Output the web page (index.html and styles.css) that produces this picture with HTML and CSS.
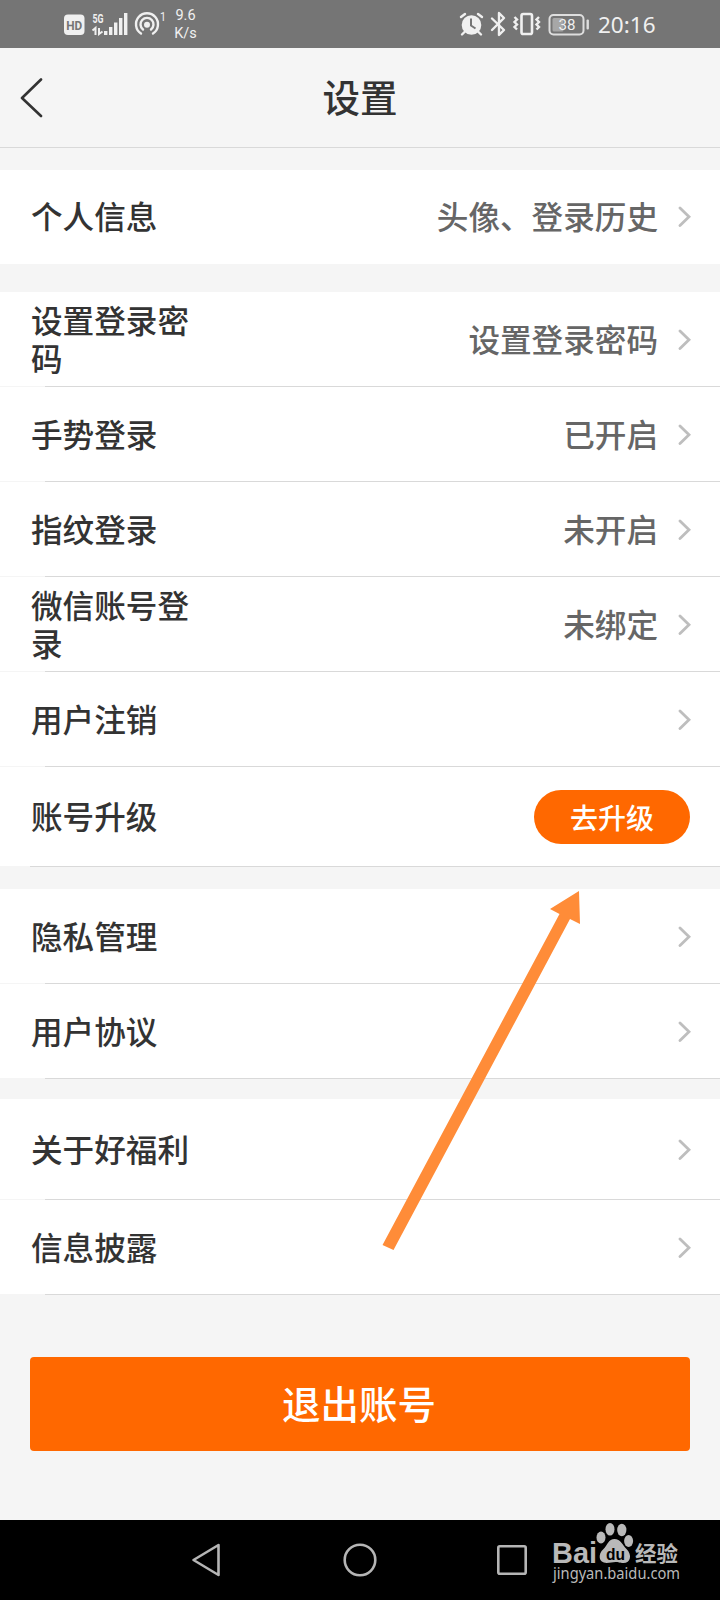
FILE: index.html
```html
<!DOCTYPE html>
<html lang="zh-CN">
<head>
<meta charset="utf-8">
<title>设置</title>
<link rel="stylesheet" href="styles.css">
</head>
<body>
<svg class="defs" aria-hidden="true">
  <symbol id="chevron" viewBox="0 0 14 22"><path d="M3 2l9 8.800-9 8.800" fill="none" stroke="#bebebe" stroke-width="2.800" stroke-linecap="round"/></symbol>
</svg>
<div class="screen">
  <div class="status">
    <svg class="status-icons" width="100" height="48" viewBox="0 0 100 48">
      <rect x="0" y="14.500" width="20.500" height="20.500" rx="4" fill="#f0f0f0"/>
      <text class="hd" x="2.200" y="29.800" textLength="16" lengthAdjust="spacingAndGlyphs">HD</text>
      <text class="fiveg" x="28.500" y="22.800" textLength="11" lengthAdjust="spacingAndGlyphs">5G</text>
      <g fill="none" stroke="#f0f0f0" stroke-width="2"><path d="M28.500 30.500l3-2.500v7M35 28v6l3.500-2.500"/></g>
      <g fill="#f0f0f0"><rect x="40" y="31" width="3.400" height="4"/><rect x="45" y="27" width="3.400" height="8"/><rect x="50" y="22.500" width="3.400" height="12.500"/><rect x="55" y="18" width="3.400" height="17"/><rect x="60" y="13" width="3.400" height="22"/></g>
      <g fill="none" stroke="#f0f0f0" stroke-width="2.400" stroke-linecap="round"><path d="M77 33.500A11 11 0 1 1 89 33.500"/><path d="M79 29.500A6.500 6.500 0 1 1 87 29.500"/></g>
      <circle cx="83" cy="24.800" r="3" fill="#f0f0f0"/>
      <text class="tiny" x="96" y="21" textLength="6" lengthAdjust="spacingAndGlyphs">1</text>
    </svg>
    <div class="speed"><span>9.6</span><span>K/s</span></div>
    <svg class="status-icons right-icons" width="132" height="48" viewBox="458 0 132 48">
      <g fill="none" stroke="#f0f0f0" stroke-width="2.400" stroke-linecap="round"><path d="M461 17l4-3M482 17l-4-3M464.500 32l-2.500 2.500M478.500 32l2.500 2.500"/></g>
      <circle cx="471.500" cy="25" r="9.800" fill="#f0f0f0"/>
      <path d="M471 18.500v7l4.500 3" fill="none" stroke="#757575" stroke-width="2"/>
      <path d="M492 18.500l12 11.500-5 5V13l5 5-12 12" fill="none" stroke="#f0f0f0" stroke-width="2.400" stroke-linejoin="round" stroke-linecap="round"/>
      <rect x="521.500" y="14" width="10.500" height="20" rx="1.800" fill="none" stroke="#f0f0f0" stroke-width="2.600"/>
      <path d="M514.500 17l2.500 2.500-2.500 2.500 2.500 2.500-2.500 2.500 2.500 2.500M539 17l-2.500 2.500 2.500 2.500-2.500 2.500 2.500 2.500-2.500 2.500" fill="none" stroke="#f0f0f0" stroke-width="2.400"/>
      <rect x="549.500" y="15" width="34" height="19.500" rx="4" fill="none" stroke="#dedede" stroke-width="2"/>
      <rect x="552.500" y="18" width="11" height="13.500" rx="1.500" fill="#a7a7a7"/>
      <rect x="586.500" y="19.500" width="2.400" height="10" rx="1" fill="#dedede"/>
      <text class="battery" x="558.500" y="30" textLength="17" lengthAdjust="spacingAndGlyphs">38</text>
    </svg>
    <div class="clock">20:16</div>
  </div>

  <header class="header">
    <svg class="back" width="24" height="40" viewBox="0 0 24 40"><path d="M21 1.500L2 20l19 18" fill="none" stroke="#333" stroke-width="2.600" stroke-linecap="round" stroke-linejoin="round"/></svg>
    <h1 class="title">设置</h1>
  </header>

  <main class="main">
    <section class="group profile">
      <div class="row plain"><span class="label">个人信息</span><span class="value">头像、登录历史</span><svg class="chev"><use href="#chevron"/></svg></div>
    </section>
    <section class="group account">
      <div class="row"><span class="label">设置登录密码</span><span class="value">设置登录密码</span><svg class="chev"><use href="#chevron"/></svg></div>
      <div class="row"><span class="label">手势登录</span><span class="value">已开启</span><svg class="chev"><use href="#chevron"/></svg></div>
      <div class="row"><span class="label">指纹登录</span><span class="value">未开启</span><svg class="chev"><use href="#chevron"/></svg></div>
      <div class="row"><span class="label">微信账号登录</span><span class="value">未绑定</span><svg class="chev"><use href="#chevron"/></svg></div>
      <div class="row"><span class="label">用户注销</span><svg class="chev"><use href="#chevron"/></svg></div>
      <div class="row upgrade"><span class="label">账号升级</span><button class="pill">去升级</button></div>
    </section>
    <section class="group privacy">
      <div class="row"><span class="label">隐私管理</span><svg class="chev"><use href="#chevron"/></svg></div>
      <div class="row"><span class="label">用户协议</span><svg class="chev"><use href="#chevron"/></svg></div>
    </section>
    <section class="group about">
      <div class="row tall"><span class="label">关于好福利</span><svg class="chev"><use href="#chevron"/></svg></div>
      <div class="row"><span class="label">信息披露</span><svg class="chev"><use href="#chevron"/></svg></div>
    </section>
    <button class="logout">退出账号</button>
  </main>

  <nav class="nav">
    <svg width="30" height="36" viewBox="0 0 30 36"><path d="M2.500 18L27.500 3v30z" fill="none" stroke="#b5b5b5" stroke-width="2.600" stroke-linejoin="round"/></svg>
    <svg width="34" height="36" viewBox="0 0 34 36"><circle cx="17" cy="18" r="15.300" fill="none" stroke="#b5b5b5" stroke-width="2.600"/></svg>
    <svg width="30" height="36" viewBox="0 0 30 36"><rect x="1.300" y="4.300" width="27.400" height="27.400" rx="1.500" fill="none" stroke="#b5b5b5" stroke-width="2.600"/></svg>
  </nav>

  <svg class="arrow" width="200" height="370" viewBox="380 885 200 370"><path d="M382.500 1245L559.500 914l-9.500-5 29-18 1 33-10-5-176.500 331z" fill="#ff8c38"/></svg>

  <svg class="watermark" width="140" height="70" viewBox="546 1518 140 70">
    <text class="brand" x="552" y="1562.500" textLength="45" lengthAdjust="spacingAndGlyphs">Bai</text>
    <g fill="#b9b9b9">
      <ellipse cx="601" cy="1537.500" rx="4.500" ry="6"/><ellipse cx="610" cy="1529.300" rx="4.500" ry="6.300"/><ellipse cx="621.800" cy="1530" rx="4.600" ry="6.200"/><ellipse cx="628.600" cy="1541" rx="4.500" ry="6"/>
      <path d="M614.500 1539c6 0 8 6 12 10 6 6 4 14-3 14-4 0-5-1-8-1s-5 1-9 1c-8 0-9-9-3-14 4-4 5-10 11-10z"/>
    </g>
    <text class="du" x="606" y="1559.500" textLength="19" lengthAdjust="spacingAndGlyphs">du</text>
    <text class="jy" x="635" y="1560.500" textLength="43" lengthAdjust="spacingAndGlyphs">经验</text>
    <text class="url" x="553" y="1579" textLength="127" lengthAdjust="spacingAndGlyphs">jingyan.baidu.com</text>
  </svg>
</div>
</body>
</html>
```
FILE: styles.css
```css
* { box-sizing: border-box; }
body { margin: 0; background: #f5f5f5; font-family: "Noto Sans CJK SC", sans-serif; color: #333; }
.defs { position: absolute; width: 0; height: 0; }
.screen { position: relative; width: 720px; height: 1600px; display: flex; flex-direction: column; overflow: hidden; }

.status { height: 48px; flex: none; background: #757575; color: #f0f0f0; display: flex; padding-left: 63.5px; font-family: "Noto Sans", sans-serif; }
.status-icons { flex: none; display: block; overflow: visible; }
.status text { fill: #f0f0f0; font-family: Roboto, sans-serif; }
.status .hd { fill: #757575; font-size: 13.5px; font-weight: 700; }
.fiveg { font-size: 13px; font-weight: 700; }
.tiny { font-size: 12px; }
.battery { font-size: 15px; }
.speed { margin-left: 10px; padding-top: 7px; width: 24px; display: flex; flex-direction: column; align-items: center; font: 14.5px/17.5px Roboto, sans-serif; }
.right-icons { margin-left: auto; }
.clock { width: 130px; padding-left: 8px; font-size: 22.5px; line-height: 50px; }

.header { height: 100px; flex: none; display: flex; align-items: center; padding-left: 20px; border-bottom: 1px solid #d9d9d9; }
.back { flex: none; }
.title { flex: 1; margin: 0 44px 3px 0; text-align: center; font-size: 37.5px; line-height: 50px; font-weight: 500; }

.main { height: 1372px; flex: none; padding-top: 22px; }
.group { background: #fff; }
.account { margin-top: 28px; }
.privacy { margin-top: 22px; }
.about { margin-top: 20px; }
.row { height: 95px; padding: 0 29px 0 31px; display: flex; align-items: center; background: linear-gradient(90deg, #f5f5f5 45px, #d9d9d9 45px) bottom / 100% 1px no-repeat; }
.plain { height: 94px; background: none; }
.upgrade { height: 100px; padding-right: 30px; background: linear-gradient(90deg, #f5f5f5 30px, #d9d9d9 30px) bottom / 100% 1px no-repeat; }
.tall { height: 101px; }
.label { width: 170px; padding-bottom: 4px; font-size: 31.6px; line-height: 38px; font-weight: 500; }
.value { margin-left: auto; margin-right: 19px; padding-bottom: 4px; font-size: 31.6px; line-height: 38px; font-weight: 500; color: #666; }
.chev { width: 14px; height: 22px; flex: none; }
.label + .chev { margin-left: auto; }
.pill { margin-left: auto; width: 156px; height: 54px; border: 0; border-radius: 27px; padding: 0; background: #ff6800; color: #fff; font: 500 28px/54px "Noto Sans CJK SC", sans-serif; }
.logout { display: block; width: 660px; height: 94px; margin: 62px 30px 0; border: 0; border-radius: 4px; padding: 0 2px 3px 0; background: #ff6800; color: #fff; font: 500 38.5px/91px "Noto Sans CJK SC", sans-serif; }

.nav { height: 80px; flex: none; background: #000; display: flex; align-items: center; padding-left: 191px; }
.nav svg { flex: none; }
.nav svg + svg { margin-left: 122px; }
.nav svg + svg + svg { margin-left: 120px; }

/* overlays above the page */
.arrow { position: absolute; left: 380px; top: 885px; }
.watermark { position: absolute; left: 546px; top: 1518px; }
.watermark text { fill: #b9b9b9; }
.brand { font: 700 29px "Liberation Sans", sans-serif; }
.watermark .du { fill: #000; font: 700 17px "Liberation Sans", sans-serif; }
.jy { font: 700 21px "Noto Sans CJK SC", sans-serif; }
.url { font: 15.500px "Noto Sans", sans-serif; }
```
